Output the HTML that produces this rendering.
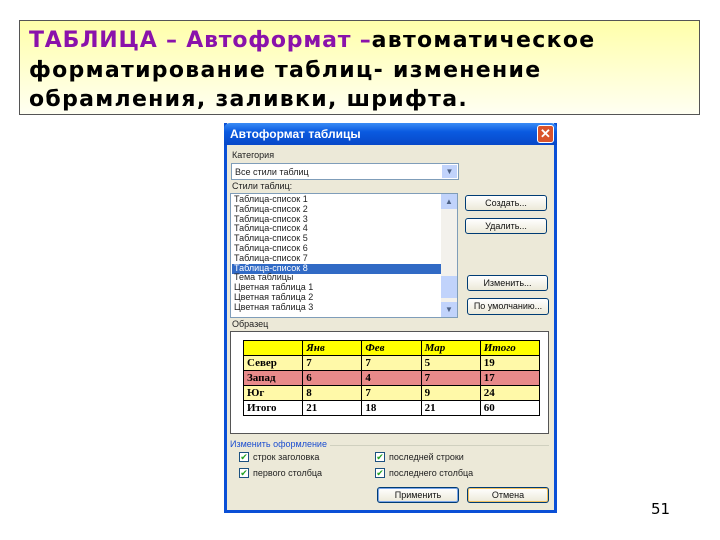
<!DOCTYPE html>
<html><head><meta charset="utf-8"><style>
*{margin:0;padding:0;box-sizing:border-box}
body{width:720px;height:540px;background:#fff;position:relative;overflow:hidden;font-family:"Liberation Sans",sans-serif}
.a{position:absolute}
.box{left:19px;top:20px;width:681px;height:95px;border:1px solid #555;background:linear-gradient(#ffffaa,#fffff2);padding:5px 0 0 9px;font-family:"DejaVu Sans",sans-serif;font-weight:bold;font-size:22px;line-height:29.5px;color:#000;letter-spacing:1.3px;white-space:nowrap}
.p{color:#8a12ab;letter-spacing:0.8px}
.dlg{left:224px;top:123px;width:333px;height:390px;background:#ece9d8;border:3px solid #0a4fd6;border-top:none}
.tb{left:224px;top:123px;width:333px;height:22px;background:linear-gradient(#3a8cf5,#0a5ae0 40%,#0848c8);color:#fff;font-weight:bold;font-size:12px;padding:4px 6px;border-radius:6px 6px 0 0}
.t{font-size:9px;color:#222;white-space:nowrap}
.btn{border:1px solid #003c74;border-radius:3px;background:linear-gradient(#fff,#ece9d8);font-size:9px;text-align:center;line-height:14px;color:#111}
.cb{width:10px;height:10px;border:1px solid #1c5180;background:#fff;color:#21a121;font-size:9px;line-height:8px;text-align:center}
table{border-collapse:collapse;font-family:"Liberation Serif",serif;font-weight:bold;font-size:11px}
td{border:1px solid #000;height:15px;padding:0 3px;width:59px}
</style></head><body>
<div class="a box"><span class="p">ТАБЛИЦА – Автоформат –</span>автоматическое<br>форматирование таблиц- изменение<br>обрамления, заливки, шрифта.</div>

<div class="a dlg"></div>
<div class="a tb">Автоформат таблицы</div>
<div class="a" style="left:537px;top:125px;width:17px;height:18px;background:#d9542c;border:1px solid #fff;border-radius:3px;color:#fff;font-size:13px;line-height:15px;text-align:center;font-weight:bold">✕</div>

<div class="a t" style="left:232px;top:150px">Категория</div>
<div class="a" style="left:231px;top:163px;width:228px;height:17px;background:#fff;border:1px solid #7f9db9"><span class="t" style="position:absolute;left:3px;top:3px">Все стили таблиц</span><div class="a" style="right:1px;top:1px;width:15px;height:13px;background:#c1d3fb;color:#4d6185;font-size:8px;text-align:center;line-height:13px">▼</div></div>
<div class="a t" style="left:232px;top:181px">Стили таблиц:</div>
<div class="a" style="left:230px;top:193px;width:228px;height:125px;background:#fff;border:1px solid #7f9db9"></div>
<div class="a" style="left:441px;top:194px;width:16px;height:123px;background:#f3f1ec"></div>
<div class="a" style="left:441px;top:194px;width:16px;height:15px;background:#c1d3fb;font-size:8px;color:#4d6185;text-align:center;line-height:15px">▲</div>
<div class="a" style="left:441px;top:276px;width:16px;height:22px;background:#c1d3fb"></div>
<div class="a" style="left:441px;top:302px;width:16px;height:15px;background:#c1d3fb;font-size:8px;color:#4d6185;text-align:center;line-height:15px">▼</div>
<div class="a" style="left:232px;top:264px;width:209px;height:10px;background:#316ac5"></div>
<div class="a t" style="left:234px;top:195px;line-height:9.8px">Таблица-список 1<br>Таблица-список 2<br>Таблица-список 3<br>Таблица-список 4<br>Таблица-список 5<br>Таблица-список 6<br>Таблица-список 7<br><span style="color:#fff">Таблица-список 8</span><br>Тема таблицы<br>Цветная таблица 1<br>Цветная таблица 2<br>Цветная таблица 3</div>

<div class="a btn" style="left:465px;top:195px;width:82px;height:16px">Создать...</div>
<div class="a btn" style="left:465px;top:218px;width:82px;height:16px">Удалить...</div>
<div class="a btn" style="left:467px;top:275px;width:81px;height:16px">Изменить...</div>
<div class="a btn" style="left:467px;top:298px;width:82px;height:17px">По умолчанию...</div>

<div class="a t" style="left:232px;top:319px">Образец</div>
<div class="a" style="left:230px;top:331px;width:319px;height:103px;background:#fff;border:1px solid #555"></div>
<table class="a" style="left:243px;top:340px;width:297px">
<tr style="background:#ffff00;font-style:italic"><td></td><td>Янв</td><td>Фев</td><td>Мар</td><td>Итого</td></tr>
<tr style="background:#fff9a8"><td>Север</td><td>7</td><td>7</td><td>5</td><td>19</td></tr>
<tr style="background:#e88a8a"><td>Запад</td><td>6</td><td>4</td><td>7</td><td>17</td></tr>
<tr style="background:#fff9a8"><td>Юг</td><td>8</td><td>7</td><td>9</td><td>24</td></tr>
<tr><td>Итого</td><td>21</td><td>18</td><td>21</td><td>60</td></tr>
</table>

<div class="a t" style="left:230px;top:439px;color:#1c4ed0">Изменить оформление</div>
<div class="a" style="left:330px;top:445px;width:219px;height:1px;background:#d0d0bf"></div>
<div class="a cb" style="left:239px;top:452px">✔</div><div class="a t" style="left:253px;top:452px">строк заголовка</div>
<div class="a cb" style="left:375px;top:452px">✔</div><div class="a t" style="left:389px;top:452px">последней строки</div>
<div class="a cb" style="left:239px;top:468px">✔</div><div class="a t" style="left:253px;top:468px">первого столбца</div>
<div class="a cb" style="left:375px;top:468px">✔</div><div class="a t" style="left:389px;top:468px">последнего столбца</div>
<div class="a btn" style="left:377px;top:487px;width:82px;height:16px;box-shadow:inset 0 0 0 1px #7aa5e8">Применить</div>
<div class="a btn" style="left:467px;top:487px;width:82px;height:16px;box-shadow:inset 0 0 0 1px #f0c060">Отмена</div>

<div class="a" style="left:651px;top:500px;font-family:'DejaVu Sans',sans-serif;font-size:15px;color:#000">51</div>
</body></html>
